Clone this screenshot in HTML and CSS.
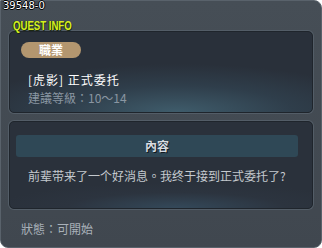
FILE: index.html
```html
<!DOCTYPE html>
<html lang="zh-Hant">
<head>
    <meta charset="UTF-8">
    <meta name="viewport" content="width=device-width, initial-scale=1.0">
    <title>Quest Info</title>
    <link rel="stylesheet" href="styles.css">
</head>
<body>
    <div class="window">
        <div class="header">
            <div class="quest-id">39548-0</div>
            <div class="header-title">QUEST INFO</div>
        </div>
        <div class="panel panel-info">
            <div class="badge">職業</div>
            <div class="quest-name">[虎影] 正式委托</div>
            <div class="quest-level">建議等級：10～14</div>
        </div>
        <div class="panel panel-content">
            <div class="section-bar">內容</div>
            <div class="quest-text">前辈带来了一个好消息。我终于接到正式委托了?</div>
        </div>
        <div class="status">狀態：可開始</div>
    </div>
</body>
</html>
```

FILE: styles.css
```css
body {
    margin: 0;
    background-color: #ffffff;
    font-family: "Noto Sans CJK TC", "Noto Sans", sans-serif;
}
.window {
    width: 322px;
    height: 248px;
    box-sizing: border-box;
    background: linear-gradient(#464e56, #40474f);
    border: 1px solid #59626b;
    border-radius: 0 8px 8px 8px;
    padding: 0 8px;
}
.header {
    height: 30px;
    margin-left: -8px;
}
.quest-id {
    font-family: "DejaVu Sans", sans-serif;
    font-size: 10px;
    line-height: 10px;
    color: #ffffff;
    padding-left: 2px;
    text-shadow: -1px 0 #000, 1px 0 #000, 0 -1px #000, 0 1px #000;
}
.header-title {
    display: inline-block;
    margin-left: 12px;
    font-family: "Liberation Sans", Arial, sans-serif;
    font-weight: bold;
    font-size: 12px;
    line-height: 12px;
    color: #d6f21e;
    transform: scaleX(0.8);
    transform-origin: left center;
    text-shadow: 1px 1px #1d2a10, -1px 0 #2a3318;
}
.panel {
    box-sizing: border-box;
    border: 1px solid #1f252c;
    border-radius: 5px;
    box-shadow: 0 0 0 1px #535d67;
    background: radial-gradient(ellipse 70% 60% at 55% 100%, #3f5c6b 0%, #2f3e4b 55%, #29303a 100%);
}
.panel-info {
    height: 82px;
    padding: 10px 0 0 11px;
}
.badge {
    width: 60px;
    height: 16px;
    border-radius: 8px;
    background-color: #b3966f;
    color: #ffffff;
    font-weight: bold;
    font-size: 12px;
    line-height: 16px;
    text-align: center;
}
.quest-name {
    margin: 14px 0 0 7px;
    font-size: 12px;
    line-height: 16px;
    letter-spacing: 1px;
    color: #ffffff;
}
.quest-level {
    margin: 1px 0 0 7px;
    font-size: 12px;
    line-height: 17px;
    color: #8a96a2;
}
.panel-content {
    height: 88px;
    margin-top: 8px;
    padding: 13px 14px 0 6px;
    background: radial-gradient(ellipse 60% 30% at 55% 100%, #34495a 0%, #2c343f 60%, #2a313b 100%);
}
.section-bar {
    height: 22px;
    border-radius: 3px;
    background-color: #2f4856;
    color: #d8dde2;
    font-weight: bold;
    font-size: 12px;
    line-height: 22px;
    text-align: center;
    text-shadow: 1px 1px #10181e;
}
.quest-text {
    margin: 10px 0 0 12px;
    font-size: 12px;
    line-height: 18px;
    color: #c4c9ce;
    white-space: nowrap;
}
.status {
    margin: 12px 0 0 12px;
    font-size: 12px;
    line-height: 16px;
    color: #a9b1b9;
}
```
